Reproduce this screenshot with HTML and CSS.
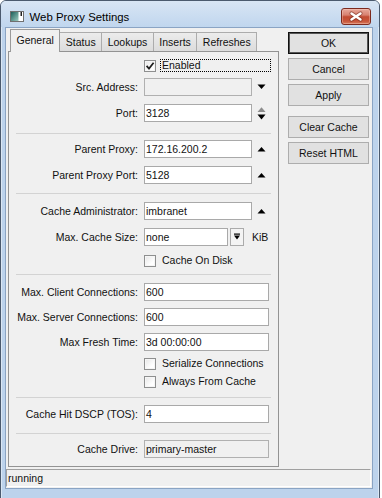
FILE: index.html
```html
<!DOCTYPE html>
<html>
<head>
<meta charset="utf-8">
<title>Web Proxy Settings</title>
<link rel="stylesheet" href="styles.css">
</head>
<body>
<div class="window">
  <div class="titlebar">
    <svg class="appicon" width="14" height="11" viewBox="0 0 14 11">
      <defs>
        <linearGradient id="ig" x1="0" y1="0" x2="1" y2="1">
          <stop offset="0" stop-color="#1d5f5a"/>
          <stop offset="1" stop-color="#9ccbc0"/>
        </linearGradient>
      </defs>
      <rect x="0.5" y="0.5" width="13" height="10" fill="#fff" stroke="#707070"/>
      <rect x="1" y="1" width="7.5" height="9" fill="url(#ig)"/>
      <rect x="10.5" y="1" width="1.5" height="4" fill="#222"/>
    </svg>
    <span class="title">Web Proxy Settings</span>
    <div class="close">
      <svg width="28" height="15" viewBox="0 0 28 15">
        <path d="M9.5 4.5L18.5 10.5M18.5 4.5L9.5 10.5" stroke="#6a2418" stroke-opacity="0.55" stroke-width="4.2" stroke-linecap="round"/>
        <path d="M9.5 4.5L18.5 10.5M18.5 4.5L9.5 10.5" stroke="#fff" stroke-width="2.4" stroke-linecap="round"/>
      </svg>
    </div>
  </div>
  <div class="client">
    <div class="main">
      <div class="left">
        <div class="tabs">
          <div class="tab active">General</div>
          <div class="tab">Status</div>
          <div class="tab">Lookups</div>
          <div class="tab">Inserts</div>
          <div class="tab">Refreshes</div>
        </div>
        <div class="panel">
          <div class="row chk mt7">
            <span class="lbl"></span>
            <span class="cb"><svg width="10" height="10" viewBox="0 0 10 10"><path d="M1.6 4.9L4 7.6L8.6 1.8" fill="none" stroke="#1e1e1e" stroke-width="1.7"/></svg></span>
            <span class="cbtext focus">Enabled</span>
          </div>
          <div class="row mt5">
            <span class="lbl">Src. Address:</span>
            <span class="inp dis"></span>
            <span class="arr"><svg width="11" height="18" viewBox="0 0 11 18"><path d="M1.5 6.5h8l-4 4.5z" fill="#000"/></svg></span>
          </div>
          <div class="row mt8">
            <span class="lbl">Port:</span>
            <span class="inp">3128</span>
            <span class="arr"><svg width="11" height="18" viewBox="0 0 11 18"><path d="M1.5 8h8l-4-4.8z" fill="#8c8c8c"/><path d="M1.5 10.5h8l-4 5z" fill="#000"/></svg></span>
          </div>
          <div class="sep mt11"></div>
          <div class="row mt6">
            <span class="lbl">Parent Proxy:</span>
            <span class="inp">172.16.200.2</span>
            <span class="arr"><svg width="11" height="18" viewBox="0 0 11 18"><path d="M1.5 11.5h8l-4-4.5z" fill="#000"/></svg></span>
          </div>
          <div class="row mt8">
            <span class="lbl">Parent Proxy Port:</span>
            <span class="inp">5128</span>
            <span class="arr"><svg width="11" height="18" viewBox="0 0 11 18"><path d="M1.5 11.5h8l-4-4.5z" fill="#000"/></svg></span>
          </div>
          <div class="sep mt9"></div>
          <div class="row mt8">
            <span class="lbl">Cache Administrator:</span>
            <span class="inp">imbranet</span>
            <span class="arr"><svg width="11" height="18" viewBox="0 0 11 18"><path d="M1.5 11.5h8l-4-4.5z" fill="#000"/></svg></span>
          </div>
          <div class="row mt8">
            <span class="lbl">Max. Cache Size:</span>
            <span class="inp w3">none</span>
            <span class="minibtn"><svg width="12" height="16" viewBox="0 0 12 16"><rect x="3" y="4.5" width="6" height="1.2" fill="#000"/><path d="M3 6.6h6l-3 4z" fill="#000"/></svg></span>
            <span class="unit">KiB</span>
          </div>
          <div class="row chk mt8">
            <span class="lbl"></span>
            <span class="cb"></span>
            <span class="cbtext">Cache On Disk</span>
          </div>
          <div class="sep mt6"></div>
          <div class="row mt8">
            <span class="lbl">Max. Client Connections:</span>
            <span class="inp w2">600</span>
          </div>
          <div class="row mt7">
            <span class="lbl">Max. Server Connections:</span>
            <span class="inp w2">600</span>
          </div>
          <div class="row mt7">
            <span class="lbl">Max Fresh Time:</span>
            <span class="inp w2">3d 00:00:00</span>
          </div>
          <div class="row chk mt6">
            <span class="lbl"></span>
            <span class="cb"></span>
            <span class="cbtext">Serialize Connections</span>
          </div>
          <div class="row chk mt4">
            <span class="lbl"></span>
            <span class="cb"></span>
            <span class="cbtext">Always From Cache</span>
          </div>
          <div class="sep mt8"></div>
          <div class="row mt7">
            <span class="lbl">Cache Hit DSCP (TOS):</span>
            <span class="inp w2">4</span>
          </div>
          <div class="sep mt10"></div>
          <div class="row mt6">
            <span class="lbl">Cache Drive:</span>
            <span class="inp w2 dis">primary-master</span>
          </div>
        </div>
      </div>
      <div class="buttons">
        <div class="btn def">OK</div>
        <div class="btn">Cancel</div>
        <div class="btn">Apply</div>
        <div class="btn gap">Clear Cache</div>
        <div class="btn">Reset HTML</div>
      </div>
    </div>
    <div class="status">running</div>
  </div>
</div>
</body>
</html>
```

FILE: styles.css
```css
html, body {
  margin: 0;
  padding: 0;
  background: #ffffff;
  overflow: hidden;
}

body {
  font-family: "Liberation Sans", Arial, sans-serif;
  font-size: 10.5px;
  color: #111;
}

.window {
  box-sizing: border-box;
  width: 380px;
  height: 512px;
  border: 1px solid #4b5a6e;
  border-radius: 6px 6px 0 0;
  background: #bdd3ec;
  box-shadow: inset 0 0 0 1px rgba(255, 255, 255, 0.45);
}

.titlebar {
  box-sizing: border-box;
  height: 26px;
  display: flex;
  align-items: center;
  padding: 5px 8px 0 9px;
  border-radius: 5px 5px 0 0;
  background: linear-gradient(#d8e5f4, #c0d6ee);
}

.appicon {
  flex: none;
  display: block;
}

.title {
  margin-left: 5.5px;
  font-size: 11.4px;
  color: #000;
  white-space: nowrap;
}

.close {
  margin-left: auto;
  box-sizing: border-box;
  width: 30px;
  height: 17px;
  border: 1px solid #7d2a1e;
  border-radius: 3px;
  background: linear-gradient(#e7a89b 0%, #d88170 40%, #c24b32 52%, #c8553a 80%, #d77a5c 100%);
  box-shadow: inset 0 0 0 1px rgba(255, 220, 210, 0.35);
}

.close svg {
  display: block;
}

.client {
  box-sizing: border-box;
  margin: 0 6px 0 4px;
  height: 462px;
  border: 1px solid #8aa4c4;
  background: #f0f0f0;
}

.main {
  display: flex;
  height: 439px;
}

.left {
  width: 271px;
  margin-left: 2px;
  flex: none;
}

.tabs {
  position: relative;
  z-index: 1;
  display: flex;
  align-items: flex-end;
  height: 23px;
  margin-top: 1px;
  margin-bottom: -1px;
  padding-left: 2px;
}

.tab {
  position: relative;
  box-sizing: border-box;
  height: 19px;
  margin-bottom: 1px;
  margin-left: -1px;
  padding: 0 5.5px;
  border: 1px solid #acacac;
  border-bottom: none;
  line-height: 18px;
  white-space: nowrap;
  background: linear-gradient(#ececec, #dcdcdc);
}

.tab:first-child {
  margin-left: 0;
}

.tab.active {
  z-index: 2;
  height: 23px;
  margin-bottom: 0;
  line-height: 21px;
  border-color: #9a9a9a;
  background: #f0f0f0;
}

.panel {
  box-sizing: border-box;
  width: 271px;
  height: 416px;
  border: 1px solid #939393;
  background: #f0f0f0;
  display: flex;
  flex-direction: column;
}

.row {
  display: flex;
  align-items: center;
  height: 18px;
  flex: none;
}

.row.chk {
  height: 14px;
  align-items: flex-start;
}

.lbl {
  flex: none;
  width: 129px;
  margin-right: 6px;
  text-align: right;
  white-space: nowrap;
  line-height: 18px;
}

.inp {
  flex: none;
  box-sizing: border-box;
  width: 108px;
  height: 18px;
  padding-left: 1px;
  border: 1px solid #a9a9a9;
  background: #fff;
  line-height: 16px;
  white-space: nowrap;
  overflow: hidden;
}

.inp.w2 {
  width: 125px;
}

.inp.w3 {
  width: 84px;
}

.inp.dis {
  background: #f0f0f0;
  border-color: #b0b0b0;
}

.arr {
  flex: none;
  width: 11px;
  height: 18px;
  margin-left: 4px;
}

.arr svg {
  display: block;
}

.minibtn {
  flex: none;
  box-sizing: border-box;
  width: 14px;
  height: 18px;
  margin-left: 2px;
  border: 1px solid #ababab;
  background: #f4f4f4;
}

.minibtn svg {
  display: block;
}

.unit {
  margin-left: 8px;
  line-height: 18px;
}

.cb {
  flex: none;
  box-sizing: border-box;
  width: 12px;
  height: 12px;
  margin-top: 1px;
  border: 1px solid #8e8f8f;
  background: linear-gradient(135deg, #e6e6e6, #ffffff 70%);
  box-shadow: inset 0 0 0 1px #f6f6f6;
}

.cb svg {
  display: block;
}

.cbtext {
  box-sizing: border-box;
  height: 13px;
  margin-left: 4px;
  padding: 0 1px;
  border: 1px dotted transparent;
  line-height: 11px;
  white-space: nowrap;
}

.cbtext.focus {
  width: 111px;
  border-color: #000;
}

.sep {
  flex: none;
  height: 1px;
  margin-left: 7px;
  margin-right: 7px;
  background: #d3d3d3;
}

.mt4 { margin-top: 4px; }
.mt5 { margin-top: 5px; }
.mt6 { margin-top: 6px; }
.mt7 { margin-top: 7px; }
.mt8 { margin-top: 8px; }
.mt9 { margin-top: 9px; }
.mt10 { margin-top: 10px; }
.mt11 { margin-top: 11px; }

.buttons {
  flex: none;
  width: 81px;
  margin-left: 9px;
  padding-top: 4px;
  display: flex;
  flex-direction: column;
}

.btn {
  box-sizing: border-box;
  height: 22px;
  margin-bottom: 4px;
  border: 1px solid #adadad;
  background: #e1e1e1;
  text-align: center;
  line-height: 20px;
  white-space: nowrap;
}

.btn.def {
  border-color: #111;
  box-shadow: inset 0 0 0 1px #555;
}

.btn.gap {
  margin-top: 6px;
}

.status {
  box-sizing: border-box;
  height: 18px;
  margin-top: 2px;
  margin-right: 1px;
  padding-left: 1px;
  border-top: 1px solid #a0a0a0;
  border-left: 1px solid #a0a0a0;
  border-right: 1px solid #fff;
  border-bottom: 1px solid #fff;
  line-height: 16px;
}
```
